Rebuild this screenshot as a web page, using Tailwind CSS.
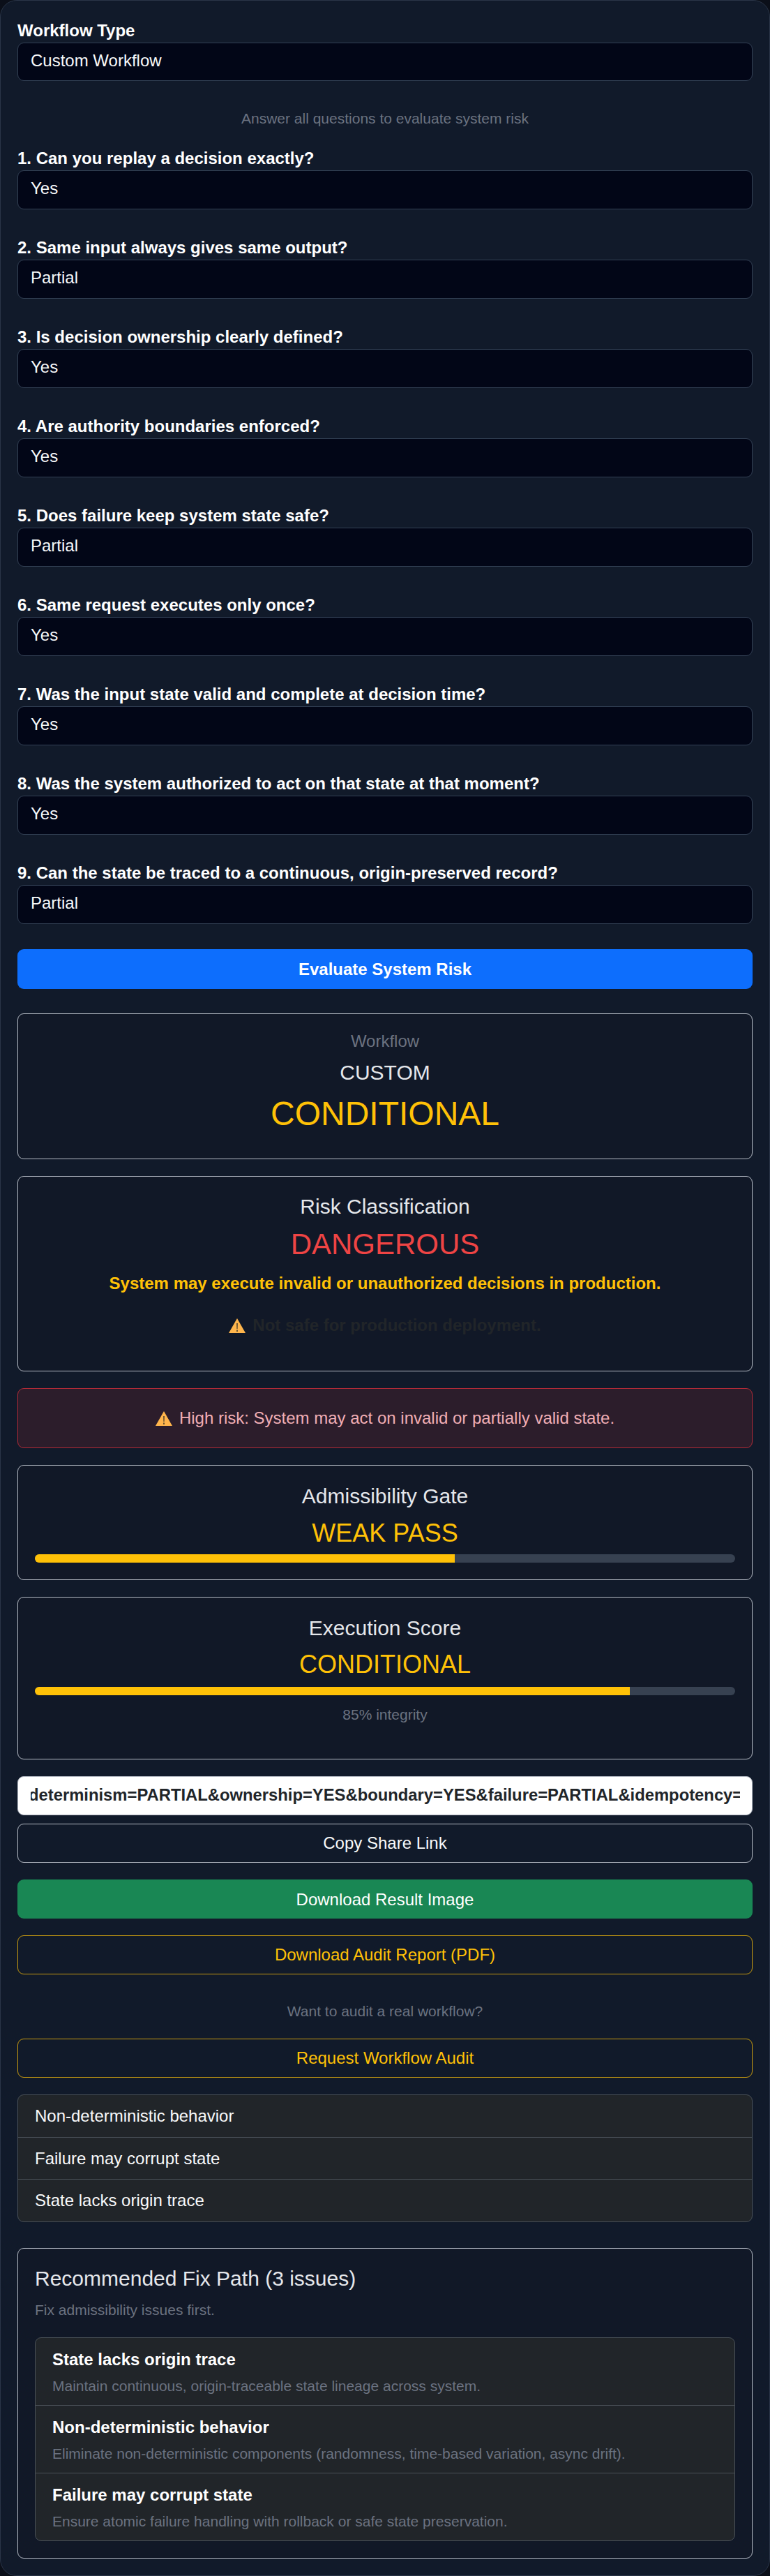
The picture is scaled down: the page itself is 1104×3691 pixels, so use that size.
<!DOCTYPE html>
<html lang="en">
<head>
    <meta charset="UTF-8">
    <meta name="viewport" content="width=device-width, initial-scale=1.0">
    <title>Workflow Risk Evaluator</title>
    <script src="https://cdn.jsdelivr.net/npm/@tailwindcss/browser@4"></script>
</head>
<body class="bg-[#0b0f19] font-['Liberation_Sans',Arial,sans-serif] text-[24px]">
    <div class="h-[3691px] w-[1104px] rounded-[24px] border border-[#2a3547] bg-[#111a2a] px-[24px] pt-[26px] text-white">
        <!-- Workflow type -->
        <label class="block font-bold leading-[34px]">Workflow Type</label>
        <select class="block h-[55px] w-full appearance-none rounded-[9px] border border-[#334155] bg-[#020617] px-[18px] pb-[4px] text-[#f8f9fa]"><option>Custom Workflow</option></select>

        <p class="mt-[39px] text-center text-[21px] leading-[30px] text-[#6b7280]">Answer all questions to evaluate system risk</p>

        <!-- Questions -->
        <div class="mt-[25px] flex flex-col gap-[38px]">
            <div>
                <label class="block font-bold leading-[34px]">1. Can you replay a decision exactly?</label>
                <select class="block h-[56px] w-full appearance-none rounded-[9px] border border-[#334155] bg-[#020617] px-[18px] pb-[5px] text-[#f8f9fa]"><option>Yes</option></select>
            </div>
            <div>
                <label class="block font-bold leading-[34px]">2. Same input always gives same output?</label>
                <select class="block h-[56px] w-full appearance-none rounded-[9px] border border-[#334155] bg-[#020617] px-[18px] pb-[5px] text-[#f8f9fa]"><option>Partial</option></select>
            </div>
            <div>
                <label class="block font-bold leading-[34px]">3. Is decision ownership clearly defined?</label>
                <select class="block h-[56px] w-full appearance-none rounded-[9px] border border-[#334155] bg-[#020617] px-[18px] pb-[5px] text-[#f8f9fa]"><option>Yes</option></select>
            </div>
            <div>
                <label class="block font-bold leading-[34px]">4. Are authority boundaries enforced?</label>
                <select class="block h-[56px] w-full appearance-none rounded-[9px] border border-[#334155] bg-[#020617] px-[18px] pb-[5px] text-[#f8f9fa]"><option>Yes</option></select>
            </div>
            <div>
                <label class="block font-bold leading-[34px]">5. Does failure keep system state safe?</label>
                <select class="block h-[56px] w-full appearance-none rounded-[9px] border border-[#334155] bg-[#020617] px-[18px] pb-[5px] text-[#f8f9fa]"><option>Partial</option></select>
            </div>
            <div>
                <label class="block font-bold leading-[34px]">6. Same request executes only once?</label>
                <select class="block h-[56px] w-full appearance-none rounded-[9px] border border-[#334155] bg-[#020617] px-[18px] pb-[5px] text-[#f8f9fa]"><option>Yes</option></select>
            </div>
            <div>
                <label class="block font-bold leading-[34px]">7. Was the input state valid and complete at decision time?</label>
                <select class="block h-[56px] w-full appearance-none rounded-[9px] border border-[#334155] bg-[#020617] px-[18px] pb-[5px] text-[#f8f9fa]"><option>Yes</option></select>
            </div>
            <div>
                <label class="block font-bold leading-[34px]">8. Was the system authorized to act on that state at that moment?</label>
                <select class="block h-[56px] w-full appearance-none rounded-[9px] border border-[#334155] bg-[#020617] px-[18px] pb-[5px] text-[#f8f9fa]"><option>Yes</option></select>
            </div>
            <div>
                <label class="block font-bold leading-[34px]">9. Can the state be traced to a continuous, origin-preserved record?</label>
                <select class="block h-[56px] w-full appearance-none rounded-[9px] border border-[#334155] bg-[#020617] px-[18px] pb-[5px] text-[#f8f9fa]"><option>Partial</option></select>
            </div>
        </div>

        <button class="mt-[36px] block h-[57px] w-full rounded-[9px] bg-[#0d6efd] font-bold text-white">Evaluate System Risk</button>

        <!-- Workflow result -->
        <div class="mt-[35px] h-[209px] rounded-[9px] border border-[#b4bac4] bg-[#111827] pt-[24px] text-center">
            <p class="leading-[30px] text-[#6b7280]">Workflow</p>
            <p class="mt-[8px] text-[30px] leading-[44px] text-[#e5e7eb]">CUSTOM</p>
            <p class="mt-[9px] text-[48px] leading-[56px] text-[#ffc107]">CONDITIONAL</p>
        </div>

        <!-- Risk classification -->
        <div class="mt-[24px] h-[280px] rounded-[9px] border border-[#b4bac4] bg-[#111827] pt-[21px] text-center">
            <p class="text-[30px] leading-[44px] text-[#e5e7eb]">Risk Classification</p>
            <p class="mt-[7px] text-[42px] leading-[50px] text-[#ef4444]">DANGEROUS</p>
            <p class="mt-[14px] font-bold leading-[34px] text-[#ffc107]">System may execute invalid or unauthorized decisions in production.</p>
            <p class="mt-[26px] flex items-center justify-center gap-[10px] font-bold leading-[34px] text-[#212529]">
                <svg class="h-[21px] w-[24px]" viewBox="0 0 24 21"><path d="M12 0 24 21H0z" fill="#ffb54c"/><path d="M11 7h2l-.3 8h-1.400zM11 16.500h2V19h-2z" fill="#6b5330"/></svg>
                Not safe for production deployment.
            </p>
        </div>

        <!-- Alert -->
        <div class="mt-[24px] flex h-[86px] items-center justify-center gap-[10px] rounded-[9px] border border-[#b02a37] bg-[#2c1d2b] text-[#f1aeb5]">
            <svg class="h-[21px] w-[24px]" viewBox="0 0 24 21"><path d="M12 0 24 21H0z" fill="#ffb54c"/><path d="M11 7h2l-.3 8h-1.400zM11 16.500h2V19h-2z" fill="#6b5330"/></svg>
            High risk: System may act on invalid or partially valid state.
        </div>

        <!-- Admissibility gate -->
        <div class="mt-[24px] h-[165px] rounded-[9px] border border-[#b4bac4] bg-[#111827] px-[24px] pt-[22px] text-center">
            <p class="text-[30px] leading-[44px] text-[#e5e7eb]">Admissibility Gate</p>
            <p class="mt-[9px] text-[36px] leading-[44px] text-[#ffc107]">WEAK PASS</p>
            <div class="mt-[8px] h-[12px] overflow-hidden rounded-full bg-[#374151]"><div class="h-full bg-[#ffc107]" style="width: 60%"></div></div>
        </div>

        <!-- Execution score -->
        <div class="mt-[24px] h-[233px] rounded-[9px] border border-[#b4bac4] bg-[#111827] px-[24px] pt-[22px] text-center">
            <p class="text-[30px] leading-[44px] text-[#e5e7eb]">Execution Score</p>
            <p class="mt-[8px] text-[36px] leading-[44px] text-[#ffc107]">CONDITIONAL</p>
            <div class="mt-[10px] h-[12px] overflow-hidden rounded-full bg-[#374151]"><div class="h-full bg-[#ffc107]" style="width: 85%"></div></div>
            <p class="mt-[13px] text-[21px] leading-[30px] text-[#6b7280]">85% integrity</p>
        </div>

        <!-- Share link -->
        <div class="mt-[24px] h-[56px] rounded-[9px] border border-[#b4bac4] bg-white pl-[18px] pr-[17px]">
            <div class="overflow-hidden whitespace-nowrap text-[23.8px] font-bold leading-[52px] text-[#212529]"><span class="-ml-[3px] inline-block">determinism=PARTIAL&amp;ownership=YES&amp;boundary=YES&amp;failure=PARTIAL&amp;idempotency=YES&amp;state=YES</span></div>
        </div>
        <button class="mt-[12px] block h-[56px] w-full rounded-[9px] border border-[#b4bac4] text-[#f8f9fa]">Copy Share Link</button>
        <button class="mt-[24px] block h-[56px] w-full rounded-[9px] bg-[#198754] pt-[1px] text-white">Download Result Image</button>
        <button class="mt-[24px] block h-[56px] w-full rounded-[9px] border border-[#c79a10] text-[#ffc107]">Download Audit Report (PDF)</button>

        <p class="mt-[38px] text-center text-[21px] leading-[30px] text-[#6b7280]">Want to audit a real workflow?</p>
        <button class="mt-[24px] block h-[56px] w-full rounded-[9px] border border-[#c79a10] text-[#ffc107]">Request Workflow Audit</button>

        <!-- Issues -->
        <ul class="mt-[24px] flex h-[183px] flex-col divide-y divide-[#495057] overflow-hidden rounded-[9px] border border-[#495057] bg-[#212529] text-[#f8f9fa]">
            <li class="flex flex-1 items-center px-[24px]">Non-deterministic behavior</li>
            <li class="flex flex-1 items-center px-[24px]">Failure may corrupt state</li>
            <li class="flex flex-1 items-center px-[24px]">State lacks origin trace</li>
        </ul>

        <!-- Fix path -->
        <div class="mt-[37px] h-[445px] rounded-[9px] border border-[#b4bac4] bg-[#111827] px-[24px] pt-[21px]">
            <h3 class="text-[30px] leading-[44px] text-[#e5e7eb]">Recommended Fix Path (3 issues)</h3>
            <p class="mt-[8px] text-[21px] leading-[30px] text-[#6b7280]">Fix admissibility issues first.</p>
            <div class="mt-[24px] flex h-[292px] flex-col divide-y divide-[#495057] overflow-hidden rounded-[9px] border border-[#495057] bg-[#212529]">
                <div class="flex-1 px-[24px] pt-[14px]">
                    <p class="font-bold leading-[34px] text-white">State lacks origin trace</p>
                    <p class="mt-[6px] text-[21px] leading-[30px] text-[#6b7280]">Maintain continuous, origin-traceable state lineage across system.</p>
                </div>
                <div class="flex-1 px-[24px] pt-[14px]">
                    <p class="font-bold leading-[34px] text-white">Non-deterministic behavior</p>
                    <p class="mt-[6px] text-[21px] leading-[30px] text-[#6b7280]">Eliminate non-deterministic components (randomness, time-based variation, async drift).</p>
                </div>
                <div class="flex-1 px-[24px] pt-[14px]">
                    <p class="font-bold leading-[34px] text-white">Failure may corrupt state</p>
                    <p class="mt-[6px] text-[21px] leading-[30px] text-[#6b7280]">Ensure atomic failure handling with rollback or safe state preservation.</p>
                </div>
            </div>
        </div>
    </div>
</body>
</html>
